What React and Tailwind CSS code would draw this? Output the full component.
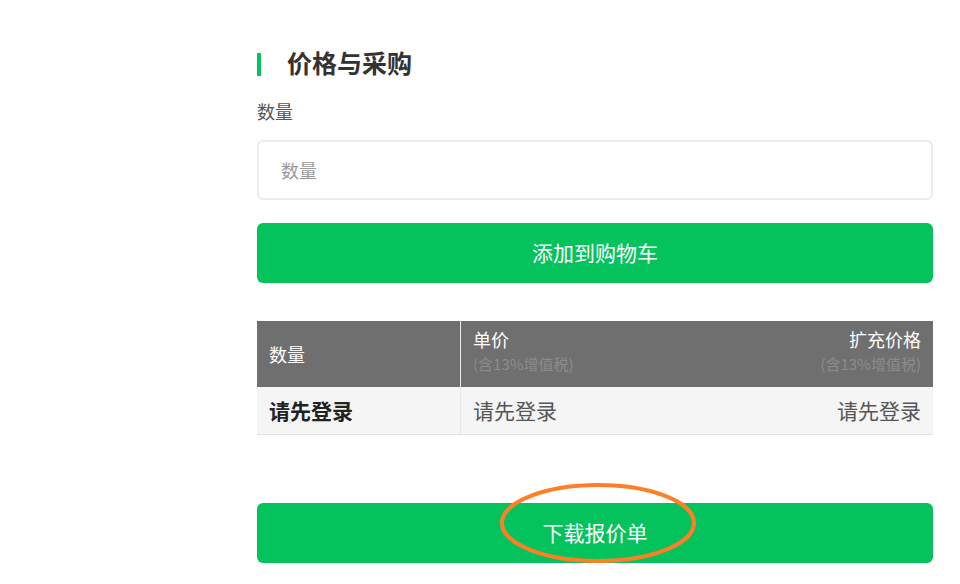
export default function App() {
  const font = { fontFamily: '"Noto Sans CJK SC", "Noto Sans", sans-serif' };
  return (
    <div className="w-[960px] h-[584px] bg-white overflow-hidden relative" style={font}>
      <div className="ml-[257px] w-[676px] pt-[46px] flex flex-col">
        <div className="flex items-center h-[32px]">
          <div className="w-[4px] h-[23px] mt-[4px] bg-[#05c35c]" />
          <div className="ml-[26px] text-[25px] leading-[32px] font-bold text-[#333]">价格与采购</div>
        </div>
        <div className="mt-[21px] text-[18px] leading-[24px] text-[#555]">数量</div>
        <div className="mt-[17px] h-[60px] border-2 border-[#ebebeb] rounded-[6px] flex items-center px-[22px] text-[18px] text-[#999]">数量</div>
        <div className="mt-[23px] h-[60px] rounded-[6px] bg-[#05c35c] flex items-center justify-center text-[21px] text-white">添加到购物车</div>
        <div className="mt-[38px] flex flex-col">
          <div className="flex h-[66px] bg-[#6f6f6f] text-white">
            <div className="w-[203px] flex items-center px-[12px] text-[18px]">数量</div>
            <div className="w-px bg-[#e8e8e8]" />
            <div className="flex-1 flex justify-between px-[12px] pt-[5px]">
              <div className="flex flex-col">
                <span className="text-[18px] leading-[27px]">单价</span>
                <span className="text-[15px] leading-[22px] text-[#8c8c8c]">(含13%增值税)</span>
              </div>
              <div className="flex flex-col items-end">
                <span className="text-[18px] leading-[27px]">扩充价格</span>
                <span className="text-[15px] leading-[22px] text-[#8c8c8c]">(含13%增值税)</span>
              </div>
            </div>
          </div>
          <div className="flex h-[48px] bg-[#f5f5f5] border-b border-[#e3e3e3]">
            <div className="w-[203px] flex items-center px-[12px] text-[21px] font-bold text-[#222]">请先登录</div>
            <div className="w-px bg-[#e6e6e6]" />
            <div className="flex-1 flex items-center justify-between px-[12px] text-[21px] text-[#555]">
              <span>请先登录</span>
              <span>请先登录</span>
            </div>
          </div>
        </div>
        <div className="mt-[68px] h-[60px] rounded-[6px] bg-[#05c35c] flex items-center justify-center text-[21px] text-white">下载报价单</div>
      </div>
      <svg className="absolute left-0 top-0 pointer-events-none" width="960" height="584">
        <ellipse cx="598" cy="523" rx="96" ry="38" fill="none" stroke="#ff7f27" strokeWidth="4" />
      </svg>
    </div>
  );
}
